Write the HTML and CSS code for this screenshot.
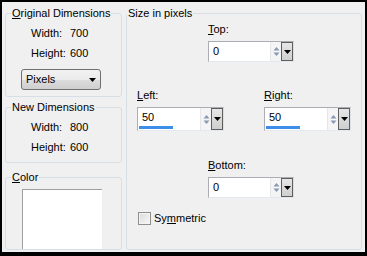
FILE: index.html
```html
<!DOCTYPE html>
<html>
<head>
<meta name="viewport" content="width=device-width, initial-scale=1">
<link rel="stylesheet" href="styles.css">
</head>
<body>

<div class="dialog">

  <div class="leftCol">
    <fieldset class="group original">
      <legend><u>O</u>riginal Dimensions</legend>
      <div class="dimRow"><span class="dimLabel">Width:</span><span>700</span></div>
      <div class="dimRow"><span class="dimLabel">Height:</span><span>600</span></div>
      <div class="combo">
        <span>Pixels</span>
        <svg width="7" height="4" viewBox="0 0 7 4"><path d="M0 0H7L3.5 4Z" fill="#000"/></svg>
      </div>
    </fieldset>

    <fieldset class="group newDim">
      <legend>New Dimensions</legend>
      <div class="dimRow"><span class="dimLabel">Width:</span><span>800</span></div>
      <div class="dimRow"><span class="dimLabel">Height:</span><span>600</span></div>
    </fieldset>

    <fieldset class="group color">
      <legend><u>C</u>olor</legend>
      <div class="swatch"></div>
    </fieldset>
  </div>

  <fieldset class="group sizeBox">
    <legend>Size in pixels</legend>

    <div class="field topField">
      <label><u>T</u>op:</label>
      <div class="spin">
        <span class="spinText">0</span>
        <div class="spinArrows">
          <svg width="9" height="5" viewBox="0 0 9 5"><path d="M1.5 4.5H7.5L4.5 1Z" fill="#8799b4"/></svg>
          <svg width="9" height="5" viewBox="0 0 9 5"><path d="M1.5 0.5H7.5L4.5 4Z" fill="#8799b4"/></svg>
        </div>
        <div class="spinDrop"><svg width="7" height="4" viewBox="0 0 7 4"><path d="M0 0H7L3.5 4Z" fill="#000"/></svg></div>
      </div>
    </div>

    <div class="sideRow">
      <div class="field">
        <label><u>L</u>eft:</label>
        <div class="spin tall">
          <span class="spinText">50</span>
          <div class="spinArrows">
            <svg width="9" height="5" viewBox="0 0 9 5"><path d="M1.5 4.5H7.5L4.5 1Z" fill="#8799b4"/></svg>
            <svg width="9" height="5" viewBox="0 0 9 5"><path d="M1.5 0.5H7.5L4.5 4Z" fill="#8799b4"/></svg>
          </div>
          <div class="spinDrop"><svg width="7" height="4" viewBox="0 0 7 4"><path d="M0 0H7L3.5 4Z" fill="#000"/></svg></div>
          <div class="bar" style="width: 34px"></div>
        </div>
      </div>
      <div class="field">
        <label><u>R</u>ight:</label>
        <div class="spin tall">
          <span class="spinText">50</span>
          <div class="spinArrows">
            <svg width="9" height="5" viewBox="0 0 9 5"><path d="M1.5 4.5H7.5L4.5 1Z" fill="#8799b4"/></svg>
            <svg width="9" height="5" viewBox="0 0 9 5"><path d="M1.5 0.5H7.5L4.5 4Z" fill="#8799b4"/></svg>
          </div>
          <div class="spinDrop"><svg width="7" height="4" viewBox="0 0 7 4"><path d="M0 0H7L3.5 4Z" fill="#000"/></svg></div>
          <div class="bar" style="width: 34px"></div>
        </div>
      </div>
    </div>

    <div class="field bottomField">
      <label><u>B</u>ottom:</label>
      <div class="spin">
        <span class="spinText">0</span>
        <div class="spinArrows">
          <svg width="9" height="5" viewBox="0 0 9 5"><path d="M1.5 4.5H7.5L4.5 1Z" fill="#8799b4"/></svg>
          <svg width="9" height="5" viewBox="0 0 9 5"><path d="M1.5 0.5H7.5L4.5 4Z" fill="#8799b4"/></svg>
        </div>
        <div class="spinDrop"><svg width="7" height="4" viewBox="0 0 7 4"><path d="M0 0H7L3.5 4Z" fill="#000"/></svg></div>
      </div>
    </div>

    <div class="check">
      <span class="box"></span>
      <span>Sy<u>m</u>metric</span>
    </div>
  </fieldset>

</div>

</body>
</html>
```

FILE: styles.css
```css
body {
  margin: 0;
}

* {
  box-sizing: border-box;
  font-family: "Liberation Sans", Arial, sans-serif;
  font-size: 11px;
  line-height: 13px;
  color: #000;
}

u {
  text-decoration: underline;
}

/* The dialog with its black frame */
.dialog {
  width: 367px;
  height: 256px;
  background: #f0f0f0;
  border: 2px solid #000;
  border-bottom-width: 4px;
  display: flex;
  gap: 4px;
  padding: 5px 3px 0 3px;
}

.leftCol {
  width: 117px;
  display: flex;
  flex-direction: column;
}

/* Group boxes */
.group {
  margin: 0;
  border: 1px solid #d5dfe5;
  border-radius: 3px;
  padding: 0 0 0 5px;
  min-width: 0;
}

.group legend {
  padding: 0 1px;
}

.original {
  height: 90px;
}

.newDim {
  height: 62px;
  margin-top: 4px;
}

.color {
  height: 79px;
  margin-top: 8px;
}

.dimRow {
  display: flex;
  margin-left: 20px;
  height: 20px;
  align-items: center;
}

.original .dimRow:first-of-type {
  margin-top: 3px;
}

.newDim .dimRow:first-of-type {
  margin-top: 3px;
}

.dimLabel {
  width: 39px;
}

/* The units drop-down */
.combo {
  width: 80px;
  height: 21px;
  margin: 6px 0 0 10px;
  border: 1px solid #707070;
  border-radius: 3px;
  background: linear-gradient(#f2f2f2 0%, #ebebeb 50%, #dddddd 51%, #cfcfcf 100%);
  display: flex;
  align-items: center;
  justify-content: space-between;
  padding: 0 4px 0 4px;
}

.combo svg {
  display: block;
}

.swatch {
  width: 80px;
  height: 60px;
  margin: 5px 0 0 11px;
  background: #fff;
  border-left: 1px solid #a0a0a0;
  border-top: 1px solid #a0a0a0;
}

/* Size in pixels */
.sizeBox {
  width: 236px;
  height: 243px;
  padding: 0;
}

.field {
  display: flex;
  flex-direction: column;
}

.field label {
  display: block;
  height: 13px;
  margin-bottom: 5px;
}

.topField {
  margin: 3px 0 0 81px;
}

.sideRow {
  display: flex;
  margin: 27px 0 0 10px;
  gap: 40px;
}

.bottomField {
  margin: 28px 0 0 81px;
}

.spin {
  position: relative;
  width: 86px;
  height: 21px;
  background: #fff;
  border: 1px solid #abadb3;
  border-right-color: #dbdfe6;
  border-bottom-color: #e3e9ef;
  display: flex;
  align-items: stretch;
}

.spin.tall {
  width: 87px;
  height: 24px;
}

.spinText {
  flex: 1;
  padding: 3px 0 0 4px;
}

.spinArrows {
  width: 11px;
  display: flex;
  flex-direction: column;
  justify-content: center;
  gap: 1px;
  background: #f4f4f4;
  border-left: 1px solid #e6e6e6;
}

.spinArrows svg {
  display: block;
  margin: 0 auto;
}

.spinDrop {
  width: 12px;
  background: linear-gradient(#e6e6e6, #cfcfcf);
  border: 1px solid #5e5e5e;
  display: flex;
  align-items: center;
  justify-content: center;
}

.spinDrop svg {
  display: block;
}

/* Blue level bar at the bottom of Left / Right */
.bar {
  position: absolute;
  left: 1px;
  bottom: 1px;
  height: 3px;
  background: #3c8ee8;
}

/* Checkbox */
.check {
  display: flex;
  align-items: center;
  gap: 3px;
  margin: 14px 0 0 11px;
}

.check .box {
  width: 13px;
  height: 13px;
  border: 1px solid #8e8f8f;
  background: linear-gradient(135deg, #dcdcdc, #f7f7f7);
  box-shadow: inset 0 0 0 1px #f4f4f4;
}
```
